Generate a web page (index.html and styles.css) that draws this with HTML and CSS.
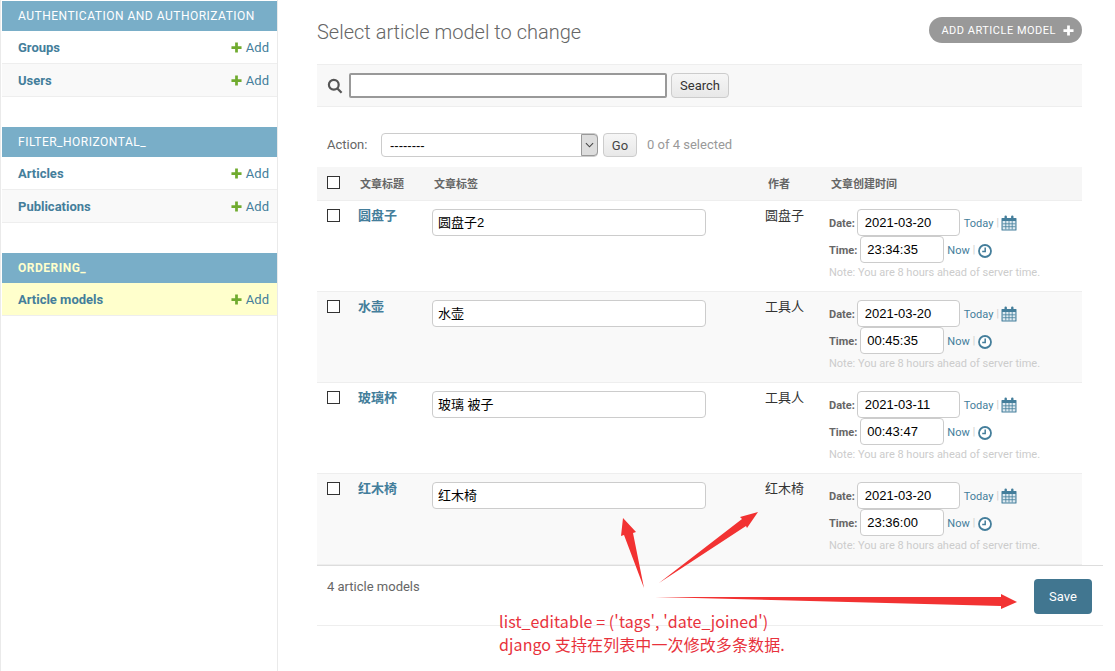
FILE: index.html
```html
<!DOCTYPE html>
<html lang="zh">
<head>
  <meta charset="UTF-8" />
  <title>Select article model to change</title>
  <link rel="stylesheet" href="styles.css">
</head>
<body>
  <div class="page">
    <aside class="sidebar">
      <div class="app-group">
        <div class="caption">Authentication and Authorization</div>
        <div class="model-row"><a class="model-name">Groups</a><a class="add-link"><svg class="plus" viewBox="0 0 12 12"><path d="M4.5 0.5h3v4h4v3h-4v4h-3v-4h-4v-3h4z"/></svg>Add</a></div>
        <div class="model-row alt"><a class="model-name">Users</a><a class="add-link"><svg class="plus" viewBox="0 0 12 12"><path d="M4.5 0.5h3v4h4v3h-4v4h-3v-4h-4v-3h4z"/></svg>Add</a></div>
      </div>
      <div class="app-group">
        <div class="caption">filter_horizontal_</div>
        <div class="model-row"><a class="model-name">Articles</a><a class="add-link"><svg class="plus" viewBox="0 0 12 12"><path d="M4.5 0.5h3v4h4v3h-4v4h-3v-4h-4v-3h4z"/></svg>Add</a></div>
        <div class="model-row alt"><a class="model-name">Publications</a><a class="add-link"><svg class="plus" viewBox="0 0 12 12"><path d="M4.5 0.5h3v4h4v3h-4v4h-3v-4h-4v-3h4z"/></svg>Add</a></div>
      </div>
      <div class="app-group">
        <div class="caption current">ordering_</div>
        <div class="model-row selected"><a class="model-name">Article models</a><a class="add-link"><svg class="plus" viewBox="0 0 12 12"><path d="M4.5 0.5h3v4h4v3h-4v4h-3v-4h-4v-3h4z"/></svg>Add</a></div>
      </div>
    </aside>

    <main class="content">
      <div class="title-bar">
        <h1>Select article model to change</h1>
        <a class="add-object">Add article model<svg class="plus-white" viewBox="0 0 12 12"><path d="M4.5 0.5h3v4h4v3h-4v4h-3v-4h-4v-3h4z"/></svg></a>
      </div>

      <div class="toolbar">
        <svg class="search-icon" viewBox="0 0 16 16"><circle cx="6.8" cy="6.8" r="4.9"/><path d="M10.4 10.4l4.2 4.4"/></svg>
        <input class="search-input" type="text">
        <button class="btn search-btn" type="button">Search</button>
      </div>

      <div class="actions">
        <label class="action-label">Action:</label>
        <div class="select-wrap">
          <select class="action-select"><option>--------</option></select>
          <span class="select-arrow"><svg viewBox="0 0 10 6"><path d="M1 1l4 4 4-4"/></svg></span>
        </div>
        <button class="btn go-btn" type="button">Go</button>
        <span class="counter">0 of 4 selected</span>
      </div>

      <table class="results">
        <thead>
          <tr>
            <th class="col-check"><input class="check" type="checkbox"></th>
            <th class="col-title">文章标题</th>
            <th class="col-tags">文章标签</th>
            <th class="col-author">作者</th>
            <th class="col-date">文章创建时间</th>
          </tr>
        </thead>
        <tbody>
          <tr>
            <td><input class="check" type="checkbox"></td>
            <td><a class="row-link">圆盘子</a></td>
            <td><input class="tag-input" type="text" value="圆盘子2"></td>
            <td class="author">圆盘子</td>
            <td>
              <div class="dt-line"><span class="dt-label">Date:</span><input class="date-input" type="text" value="2021-03-20"><a class="shortcut">Today</a><span class="sep">|</span><svg class="cal" viewBox="0 0 16 16"><use href="#cal-icon"/></svg></div>
              <div class="dt-line"><span class="dt-label">Time:</span><input class="time-input" type="text" value="23:34:35"><a class="shortcut">Now</a><span class="sep">|</span><svg class="clock" viewBox="0 0 14 14"><use href="#clock-icon"/></svg></div>
              <div class="tz-note">Note: You are 8 hours ahead of server time.</div>
            </td>
          </tr>
          <tr>
            <td><input class="check" type="checkbox"></td>
            <td><a class="row-link">水壶</a></td>
            <td><input class="tag-input" type="text" value="水壶"></td>
            <td class="author">工具人</td>
            <td>
              <div class="dt-line"><span class="dt-label">Date:</span><input class="date-input" type="text" value="2021-03-20"><a class="shortcut">Today</a><span class="sep">|</span><svg class="cal" viewBox="0 0 16 16"><use href="#cal-icon"/></svg></div>
              <div class="dt-line"><span class="dt-label">Time:</span><input class="time-input" type="text" value="00:45:35"><a class="shortcut">Now</a><span class="sep">|</span><svg class="clock" viewBox="0 0 14 14"><use href="#clock-icon"/></svg></div>
              <div class="tz-note">Note: You are 8 hours ahead of server time.</div>
            </td>
          </tr>
          <tr>
            <td><input class="check" type="checkbox"></td>
            <td><a class="row-link">玻璃杯</a></td>
            <td><input class="tag-input" type="text" value="玻璃 被子"></td>
            <td class="author">工具人</td>
            <td>
              <div class="dt-line"><span class="dt-label">Date:</span><input class="date-input" type="text" value="2021-03-11"><a class="shortcut">Today</a><span class="sep">|</span><svg class="cal" viewBox="0 0 16 16"><use href="#cal-icon"/></svg></div>
              <div class="dt-line"><span class="dt-label">Time:</span><input class="time-input" type="text" value="00:43:47"><a class="shortcut">Now</a><span class="sep">|</span><svg class="clock" viewBox="0 0 14 14"><use href="#clock-icon"/></svg></div>
              <div class="tz-note">Note: You are 8 hours ahead of server time.</div>
            </td>
          </tr>
          <tr>
            <td><input class="check" type="checkbox"></td>
            <td><a class="row-link">红木椅</a></td>
            <td><input class="tag-input" type="text" value="红木椅"></td>
            <td class="author">红木椅</td>
            <td>
              <div class="dt-line"><span class="dt-label">Date:</span><input class="date-input" type="text" value="2021-03-20"><a class="shortcut">Today</a><span class="sep">|</span><svg class="cal" viewBox="0 0 16 16"><use href="#cal-icon"/></svg></div>
              <div class="dt-line"><span class="dt-label">Time:</span><input class="time-input" type="text" value="23:36:00"><a class="shortcut">Now</a><span class="sep">|</span><svg class="clock" viewBox="0 0 14 14"><use href="#clock-icon"/></svg></div>
              <div class="tz-note">Note: You are 8 hours ahead of server time.</div>
            </td>
          </tr>
        </tbody>
      </table>

      <div class="footer-bar">
        <span class="count">4 article models</span>
        <button class="save-btn" type="button">Save</button>
      </div>
    </main>
  </div>

  <!-- shared icons -->
  <svg class="icon-defs" width="0" height="0">
    <symbol id="cal-icon" viewBox="0 0 16 16">
      <path fill="#447e9b" d="M1 3h2.5V1.6a1.2 1.2 0 0 1 2.4 0V3h4.2V1.6a1.2 1.2 0 0 1 2.4 0V3H15a.5.5 0 0 1 .5.5v11.6a.5.5 0 0 1-.5.5H1a.5.5 0 0 1-.5-.5V3.5A.5.5 0 0 1 1 3z"/>
      <path fill="#dfeaf1" d="M1.6 6h12.8v8.5H1.6z"/>
      <path stroke="#447e9b" stroke-width=".8" d="M1.6 8.8h12.8M1.6 11.7h12.8M4.8 6v8.5M8 6v8.5M11.2 6v8.5"/>
    </symbol>
    <symbol id="clock-icon" viewBox="0 0 14 14">
      <circle cx="7" cy="7" r="6" fill="#fff" stroke="#447e9b" stroke-width="1.8"/>
      <path d="M7.2 3.4v4H4.2" fill="none" stroke="#447e9b" stroke-width="1.5"/>
    </symbol>
  </svg>

  <!-- red annotation drawn over the screenshot -->
  <svg class="arrows" viewBox="0 0 1115 671">
    <path d="M644 588L633 533 636 532 623 518 621 536 624 535z"/>
    <path d="M659 583L746 526 747 528 758 512 740 517 742 519z"/>
    <path d="M655 597L1001 597V594L1017 602 1001 609V606z"/>
  </svg>
  <div class="note-text">list_editable = ('tags', 'date_joined')<br>django 支持在列表中一次修改多条数据.</div>
</body>
</html>
```

FILE: styles.css
```css
* {
  box-sizing: border-box;
}
body {
  margin: 0;
  background-color: #fff;
  color: #333;
  font-family: Roboto, "Noto Sans CJK SC", sans-serif;
  font-size: 13px;
  overflow: hidden;
}
a {
  color: #447e9b;
  text-decoration: none;
}
.page {
  display: flex;
  align-items: stretch;
  height: 671px;
}

/* sidebar */
.sidebar {
  flex: none;
  width: 278px;
  padding: 1px 0 0 1px;
  border-left: 1px solid #eaeaea;
  border-right: 1px solid #eaeaea;
}
.app-group {
  margin-bottom: 30px;
}
.caption {
  height: 30px;
  padding: 0 16px;
  background-color: #79aec8;
  color: #fff;
  font-size: 12px;
  line-height: 30px;
  letter-spacing: 0.5px;
  text-transform: uppercase;
  white-space: nowrap;
}
.caption.current {
  color: #ffc;
  font-weight: 700;
}
.model-row {
  display: flex;
  justify-content: space-between;
  align-items: center;
  height: 33px;
  padding: 0 8px 0 16px;
  border-bottom: 1px solid #eee;
}
.model-row.alt {
  background-color: #f9f9f9;
}
.model-row.selected {
  background-color: #ffc;
}
.model-name {
  font-weight: 700;
}
.add-link {
  display: flex;
  align-items: center;
  gap: 4px;
}
.plus {
  width: 11px;
  height: 11px;
  fill: #70ab2f;
}

/* main area */
.content {
  flex: none;
  width: 786px;
  margin-left: 39px;
}
.title-bar {
  display: flex;
  justify-content: space-between;
  align-items: center;
  width: 765px;
  height: 64px;
}
h1 {
  margin: 0;
  color: #666;
  font-size: 20px;
  font-weight: 300;
}
.add-object {
  display: flex;
  align-items: center;
  gap: 7px;
  height: 26px;
  margin-top: -4px;
  padding: 0 8px 0 12px;
  border-radius: 13px;
  background-color: #999;
  color: #fff;
  font-size: 11px;
  letter-spacing: 0.5px;
  text-transform: uppercase;
}
.plus-white {
  width: 11px;
  height: 11px;
  fill: #fff;
}
.toolbar {
  display: flex;
  align-items: center;
  width: 765px;
  height: 43px;
  padding-left: 10px;
  border-top: 1px solid #eee;
  border-bottom: 1px solid #eee;
  background-color: #f8f8f8;
}
.search-icon {
  width: 16px;
  height: 16px;
  margin-right: 6px;
  fill: none;
  stroke: #555;
  stroke-width: 2.2;
}
.search-input {
  width: 318px;
  height: 25px;
  border: 2px solid #999;
  border-radius: 2px;
  background-color: #fff;
}
.btn {
  height: 25px;
  border: 1px solid #ccc;
  border-radius: 4px;
  background: linear-gradient(#f6f6f6, #e8e8e8);
  color: #333;
  font-family: inherit;
  font-size: 13px;
  padding: 0;
}
.search-btn {
  width: 58px;
  margin-left: 4px;
}
.actions {
  display: flex;
  align-items: center;
  width: 765px;
  height: 24px;
  margin-top: 26px;
  padding-left: 10px;
  color: #666;
}
.action-label,
.counter {
  padding-bottom: 2px;
}
.action-label {
  width: 54px;
}
.select-wrap {
  position: relative;
  width: 217px;
  height: 24px;
}
.action-select {
  width: 100%;
  height: 100%;
  padding: 0 8px;
  border: 1px solid #ccc;
  border-radius: 4px;
  background-color: #fff;
  color: #000;
  font-family: "Liberation Sans", sans-serif;
  font-size: 13px;
  appearance: none;
}
.select-arrow {
  position: absolute;
  top: 1px;
  right: 0;
  display: flex;
  align-items: center;
  justify-content: center;
  width: 17px;
  height: 22px;
  border: 1px solid #999;
  border-radius: 0 4px 4px 0;
  background-color: #ddd;
}
.select-arrow svg {
  width: 9px;
  height: 6px;
  fill: none;
  stroke: #444;
  stroke-width: 1.2;
}
.go-btn {
  width: 34px;
  height: 24px;
  margin-left: 5px;
  color: #444;
}
.counter {
  margin-left: 10px;
  color: #999;
}

/* results table */
.results {
  width: 765px;
  margin-top: 10px;
  border-collapse: collapse;
  table-layout: fixed;
}
.results th {
  height: 33px;
  padding: 0 10px 0 12px;
  border-bottom: 1px solid #eee;
  background-color: #f6f6f6;
  color: #666;
  font-size: 11px;
  font-weight: 600;
  text-align: left;
}
.results th.col-check {
  padding: 0 0 1px 10px;
}
.col-check {
  width: 31px;
}
.col-title {
  width: 74px;
}
.col-tags {
  width: 334px;
}
.col-author {
  width: 63px;
}
.col-date {
  width: 263px;
}
.results td {
  height: 91px;
  padding: 8px 10px 0;
  border-bottom: 1px solid #eee;
  vertical-align: top;
}
.results tbody tr:nth-child(even) td {
  background-color: #f9f9f9;
}
.check {
  display: block;
  width: 13px;
  height: 13px;
  margin: 0;
  border: 1px solid #333;
  background-color: #fff;
  appearance: none;
}
.row-link {
  display: block;
  font-weight: 700;
  line-height: 14px;
}
.results td.author {
  padding-left: 9px;
  line-height: 14px;
}
.tag-input,
.date-input,
.time-input {
  display: block;
  height: 27px;
  padding: 0 5px;
  border: 1px solid #ccc;
  border-radius: 4px;
  background-color: #fff;
  color: #000;
  font-family: "Liberation Sans", "Noto Sans CJK SC", sans-serif;
  font-size: 13px;
}
.tag-input {
  width: 274px;
  padding: 0 5px 2px;
}
.date-input {
  width: 103px;
  margin-left: 2px;
  padding-left: 7px;
}
.time-input {
  width: 84px;
  margin-left: 3px;
  margin-right: -1px;
  padding-left: 6px;
}
.dt-line {
  display: flex;
  align-items: center;
  height: 27px;
}
.dt-label {
  margin-top: 2px;
  color: #666;
  font-size: 11px;
  font-weight: 700;
}
.shortcut {
  margin: 2px 0 0 4px;
  font-size: 11px;
}
.sep {
  margin: 0 3px;
  color: #ccc;
  font-size: 10px;
}
.cal {
  width: 16px;
  height: 16px;
  margin: 1px 0 0 -1px;
}
.clock {
  width: 14px;
  height: 14px;
  margin: 3px 0 0 0;
}
.tz-note {
  margin-top: 2px;
  color: #ccc;
  font-size: 11px;
  line-height: 16px;
}
.footer-bar {
  display: flex;
  justify-content: space-between;
  align-items: flex-start;
  height: 61px;
  padding: 13px 11px 0 10px;
  border-top: 1px solid #ddd;
  border-bottom: 1px solid #eee;
  color: #666;
}
.count {
  line-height: 16px;
}
.save-btn {
  width: 58px;
  height: 35px;
  border: 0;
  border-radius: 4px;
  background-color: #417690;
  color: #fff;
  font-family: inherit;
  font-size: 13px;
  padding: 0;
}

/* annotation layer */
.icon-defs {
  position: absolute;
}
.arrows {
  position: absolute;
  top: 0;
  left: 0;
  width: 1115px;
  height: 671px;
  fill: #f23232;
  pointer-events: none;
}
.note-text {
  position: absolute;
  top: 610px;
  left: 499px;
  color: #e8323c;
  font-family: "Noto Sans CJK SC", sans-serif;
  font-size: 16px;
  line-height: 23px;
  letter-spacing: 0.1px;
  white-space: nowrap;
}
```
